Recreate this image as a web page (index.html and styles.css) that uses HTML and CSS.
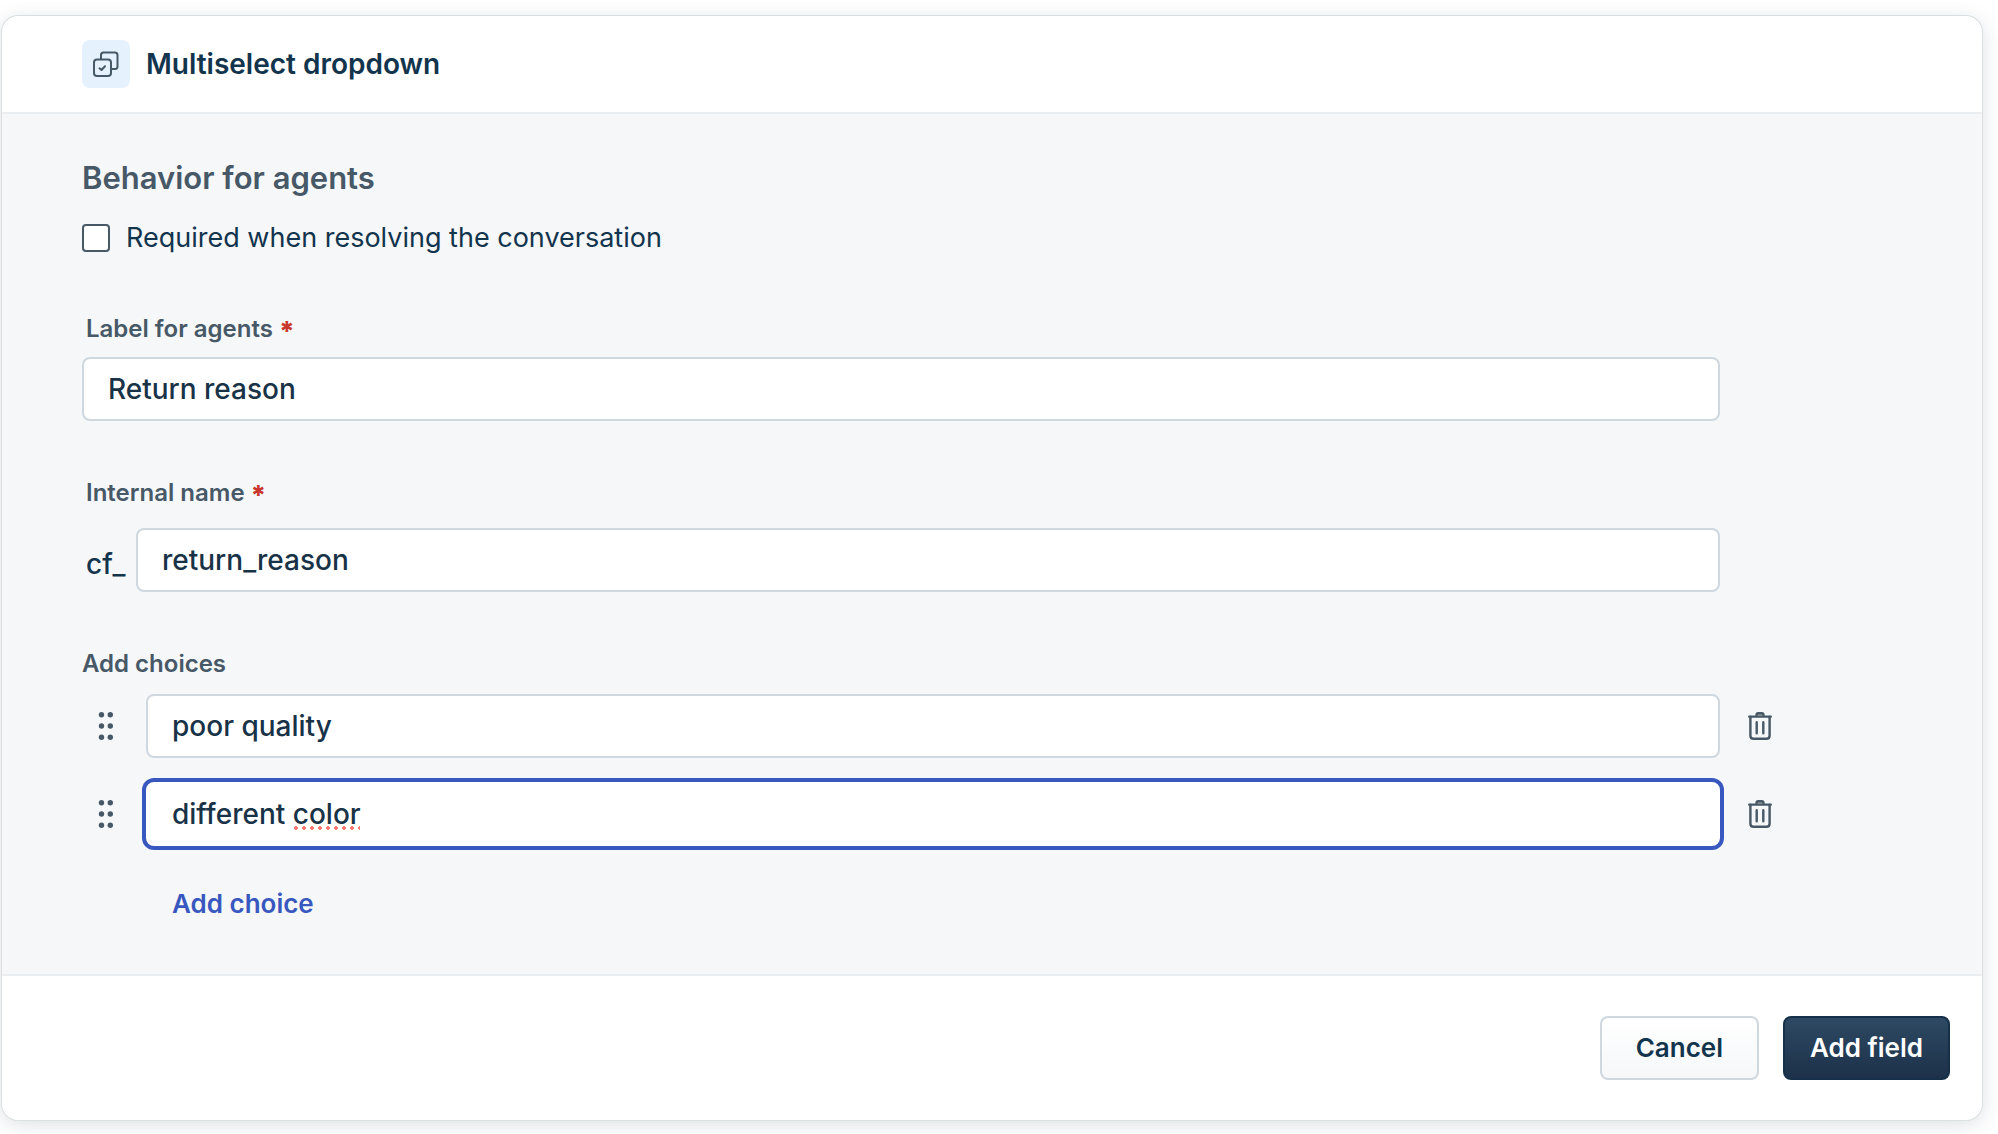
FILE: index.html
```html
<!DOCTYPE html>
<html lang="en">
<head>
<meta charset="utf-8">
<meta name="viewport" content="width=device-width, initial-scale=1">
<title>Multiselect dropdown</title>
<link rel="stylesheet" href="styles.css">
</head>
<body>
<form class="panel">
  <header class="panel-header">
    <span class="type-icon">
      <svg width="28" height="28" viewBox="0 0 28 28" fill="none" stroke="#475867" stroke-width="2" stroke-linecap="round" stroke-linejoin="round" aria-hidden="true">
        <path d="M9 9V5Q9 2.500 11.500 2.500H23Q25.500 2.500 25.500 5V16.500Q25.500 19 23 19H20"/>
        <rect x="2" y="9.500" width="17" height="16.500" rx="3"/>
        <path d="M7.500 18.300L9.500 20L13 16.300"/>
      </svg>
    </span>
    <h1 class="panel-title">Multiselect dropdown</h1>
  </header>

  <main class="panel-body">
    <h2 class="section-title">Behavior for agents</h2>
    <div class="check-row">
      <input class="checkbox" type="checkbox" id="required">
      <label for="required">Required when resolving the conversation</label>
    </div>

    <div class="field">
      <label class="field-label" for="agent-label">Label for agents<span class="asterisk">*</span></label>
      <input class="text-input" type="text" id="agent-label" value="Return reason">
    </div>

    <div class="field field-internal">
      <label class="field-label" for="internal-name">Internal name<span class="asterisk">*</span></label>
      <div class="prefixed">
        <span class="prefix">cf_</span>
        <input class="text-input" type="text" id="internal-name" value="return_reason">
      </div>
    </div>

    <fieldset class="choices">
      <legend class="choices-label">Add choices</legend>
      <div class="choice">
        <button class="icon-button" type="button" aria-label="Reorder choice">
          <svg width="16" height="28" viewBox="0 0 16 28" fill="#475867"><circle cx="3.500" cy="2.700" r="2.700"/><circle cx="12.300" cy="2.700" r="2.700"/><circle cx="3.500" cy="14" r="2.700"/><circle cx="12.300" cy="14" r="2.700"/><circle cx="3.500" cy="25.300" r="2.700"/><circle cx="12.300" cy="25.300" r="2.700"/></svg>
        </button>
        <div class="choice-box"><input class="text-input" type="text" aria-label="Choice 1" value="poor quality"></div>
        <button class="icon-button" type="button" aria-label="Delete choice">
          <svg width="24" height="28" viewBox="0 0 24 28" fill="none" stroke="#475867" stroke-width="2.400" stroke-linecap="round"><path d="M8.500 3.500V3Q8.500 1.200 10.300 1.200H13.700Q15.500 1.200 15.500 3V3.500" fill="#919ca6"/><path d="M1.200 4.600H22.800"/><path d="M2.400 5V23.800Q2.400 26.800 5.400 26.800H18.600Q21.600 26.800 21.600 23.800V5M8.700 10.300V21.300M15.300 10.300V21.300"/></svg>
        </button>
      </div>
      <div class="choice">
        <button class="icon-button" type="button" aria-label="Reorder choice">
          <svg width="16" height="28" viewBox="0 0 16 28" fill="#475867"><circle cx="3.500" cy="2.700" r="2.700"/><circle cx="12.300" cy="2.700" r="2.700"/><circle cx="3.500" cy="14" r="2.700"/><circle cx="12.300" cy="14" r="2.700"/><circle cx="3.500" cy="25.300" r="2.700"/><circle cx="12.300" cy="25.300" r="2.700"/></svg>
        </button>
        <div class="choice-box"><input class="text-input is-active" type="text" aria-label="Choice 2" value="different color" spellcheck="false"><span class="spelling-mark"></span></div>
        <button class="icon-button" type="button" aria-label="Delete choice">
          <svg width="24" height="28" viewBox="0 0 24 28" fill="none" stroke="#475867" stroke-width="2.400" stroke-linecap="round"><path d="M8.500 3.500V3Q8.500 1.200 10.300 1.200H13.700Q15.500 1.200 15.500 3V3.500" fill="#919ca6"/><path d="M1.200 4.600H22.800"/><path d="M2.400 5V23.800Q2.400 26.800 5.400 26.800H18.600Q21.600 26.800 21.600 23.800V5M8.700 10.300V21.300M15.300 10.300V21.300"/></svg>
        </button>
      </div>
      <button class="add-choice" type="button">Add choice</button>
    </fieldset>
  </main>

  <footer class="panel-footer">
    <button class="button button-secondary" type="button">Cancel</button>
    <button class="button button-primary" type="submit">Add field</button>
  </footer>
</form>
</body>
</html>
```
FILE: styles.css
```css
* {
  box-sizing: border-box;
}

body {
  margin: 0;
  padding: 16px 16px 14px 2px;
  background: #fff;
  color: #12344d;
  font-family: Inter, "Liberation Sans", sans-serif;
  font-size: 27px;
  line-height: 36px;
}

button,
input {
  font: inherit;
  color: inherit;
}

h1,
h2 {
  margin: 0;
}

.panel {
  border-radius: 16px;
  background: #fff;
  box-shadow: 0 0 0 1px #dadfe0, 0 4px 20px rgba(24, 50, 71, 0.16);
}

.panel-header {
  display: flex;
  align-items: center;
  gap: 16px;
  padding: 24px 80px;
  border-bottom: 2px solid #ebeef0;
}

.type-icon {
  display: grid;
  place-items: center;
  width: 48px;
  height: 48px;
  border-radius: 8px;
  background: #e5f2fd;
}

.panel-title {
  font-size: 28px;
  font-weight: 600;
}

.panel-body {
  padding: 44px 198px 52px 80px;
  background: #f5f7f9;
}

.section-title {
  color: #475867;
  font-size: 31px;
  font-weight: 600;
  line-height: 40px;
}

.check-row {
  display: flex;
  align-items: center;
  gap: 16px;
  margin-top: 22px;
}

.checkbox {
  appearance: none;
  width: 28px;
  height: 28px;
  margin: 0;
  border: 2px solid #475867;
  border-radius: 4px;
  background: #fff;
}

.field {
  margin: 57px 64px 0 0;
}

.field-internal {
  margin-top: 56px;
}

.field-label,
.choices-label {
  display: block;
  color: #475867;
  font-size: 24px;
  font-weight: 600;
  line-height: 32px;
}

.field-label {
  margin-bottom: 12px;
  padding-left: 4px;
}

.asterisk {
  margin-left: 6px;
  color: #c9372c;
  font-size: 27px;
  font-weight: 800;
  line-height: 24px;
  vertical-align: -4px;
}

.text-input {
  display: block;
  width: 100%;
  min-width: 0;
  height: 64px;
  padding: 0 24px;
  border: 2px solid #cfd7df;
  border-radius: 8px;
  background: #fff;
  color: #183247;
  font-size: 28px;
  font-weight: 500;
}

.text-input.is-active {
  border-color: #fff;
  box-shadow: 0 0 0 4px #3858bf;
  outline: none;
}

.field-internal .field-label {
  margin-bottom: 19px;
}

.prefixed {
  display: flex;
  align-items: center;
  gap: 8px;
}

.prefix {
  flex: none;
  width: 46px;
  padding: 8px 0 0 4px;
  font-size: 28px;
  font-weight: 500;
}

.choices {
  margin: 56px 0 0;
  padding: 0;
  border: 0;
}

.choices-label {
  margin-bottom: 14px;
  padding: 0;
}

.choice {
  display: grid;
  grid-template-columns: 48px 1fr 48px;
  align-items: center;
  column-gap: 16px;
  margin-bottom: 24px;
}

.choice-box {
  position: relative;
}

.spelling-mark {
  position: absolute;
  left: 146px;
  bottom: 16px;
  width: 68px;
  height: 4px;
  background: radial-gradient(circle, #f77b72 2px, transparent 2px) 0 0 / 8px 4px repeat-x;
}

.icon-button {
  display: grid;
  place-items: center;
  height: 40px;
  padding: 0;
  border: 0;
  background: none;
}

.icon-button svg {
  display: block;
}

.add-choice {
  display: block;
  margin: 40px 0 0 64px;
  padding: 0 26px;
  border: 0;
  background: none;
  color: #3858bf;
  font-size: 26px;
  font-weight: 600;
}

.panel-footer {
  display: flex;
  justify-content: flex-end;
  gap: 24px;
  padding: 40px 32px;
  border-top: 2px solid #ebeef0;
}

.button {
  height: 64px;
  border: 2px solid;
  border-radius: 8px;
  font-size: 26px;
  font-weight: 600;
}

.button-secondary {
  padding: 0 34px;
  border-color: #cfd7df;
  background: linear-gradient(#fff, #f5f7f9);
}

.button-primary {
  padding: 0 25px;
  border-color: #17304a;
  background: linear-gradient(#2f4a64, #1c3049) border-box;
  color: #fff;
}
```
